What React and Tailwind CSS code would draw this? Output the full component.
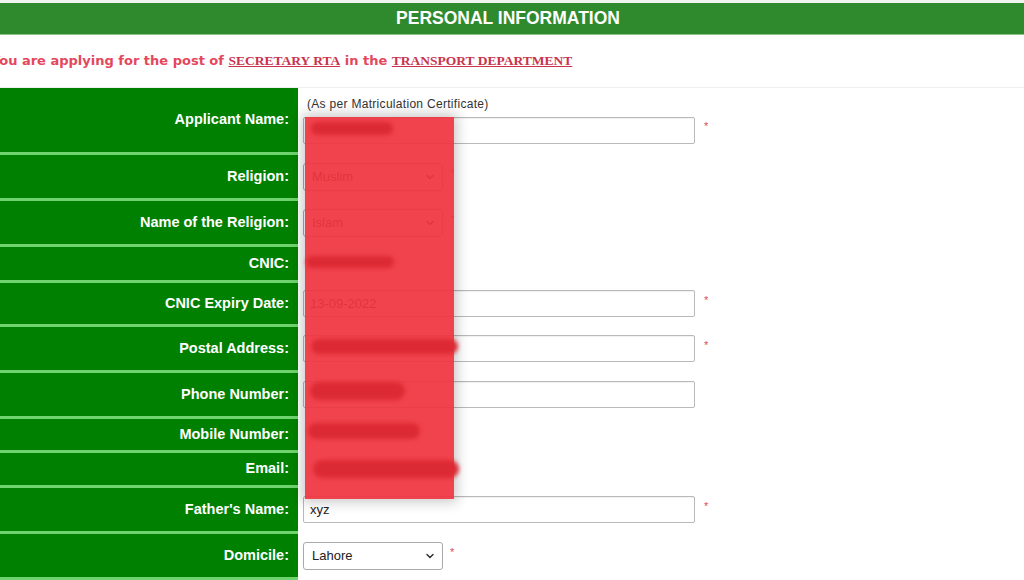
import React from "react";
import { ChevronDown } from "lucide-react";

const font = { fontFamily: '"Liberation Sans", Arial, sans-serif' };
const serif = { fontFamily: '"Liberation Serif", "Times New Roman", serif' };
const verdana = { fontFamily: '"DejaVu Sans", Verdana, sans-serif' };

function Star({ className = "" }) {
  return <span className={"text-[#e04a5a] text-[11px] leading-none -mt-[6px] " + className}>*</span>;
}

function TextInput({ value = "" }) {
  return (
    <div className="flex items-center">
      <div className="w-[392px] h-[27px] border border-[#b9b9b9] rounded-[2px] bg-white flex items-center px-[6px] text-[13px] text-[#222] shadow-[inset_0_1px_1px_rgba(0,0,0,0.06)]">
        {value}
      </div>
    </div>
  );
}

function Select({ value }) {
  return (
    <div className="w-[140px] h-[28px] border border-[#a9a9a9] rounded-[3px] bg-white flex items-center justify-between pl-[8px] pr-[6px] text-[13px] text-[#222]">
      <span>{value}</span>
      <ChevronDown size={12} strokeWidth={3} className="text-[#333]" />
    </div>
  );
}

const rows = [
  {
    label: "Applicant Name:",
    h: "h-[67px]",
    content: (
      <div className="flex flex-col pt-[10px]">
        <span className="text-[12px] tracking-[0.3px] text-[#333] pl-[4px] leading-[13px]">(As per Matriculation Certificate)</span>
        <div className="flex items-start mt-[6px] gap-[9px]">
          <TextInput />
          <Star className="mt-[4px]" />
        </div>
      </div>
    ),
    top: true,
  },
  {
    label: "Religion:",
    h: "h-[46px]",
    content: (
      <div className="flex items-center gap-[7px]">
        <Select value="Muslim" />
        <Star />
      </div>
    ),
  },
  {
    label: "Name of the Religion:",
    h: "h-[46px]",
    content: (
      <div className="flex items-center gap-[7px]">
        <Select value="Islam" />
        <Star />
      </div>
    ),
  },
  { label: "CNIC:", h: "h-[36px]", content: null },
  {
    label: "CNIC Expiry Date:",
    h: "h-[44px]",
    content: (
      <div className="flex items-center gap-[9px]">
        <TextInput value="13-09-2022" />
        <Star />
      </div>
    ),
  },
  {
    label: "Postal Address:",
    h: "h-[46px]",
    content: (
      <div className="flex items-center gap-[9px]">
        <TextInput />
        <Star />
      </div>
    ),
  },
  {
    label: "Phone Number:",
    h: "h-[46px]",
    content: (
      <div className="flex items-center gap-[9px]">
        <TextInput />
      </div>
    ),
  },
  { label: "Mobile Number:", h: "h-[34px]", content: null },
  { label: "Email:", h: "h-[35px]", content: null },
  {
    label: "Father's Name:",
    h: "h-[46px]",
    content: (
      <div className="flex items-center gap-[9px]">
        <TextInput value="xyz" />
        <Star />
      </div>
    ),
  },
  {
    label: "Domicile:",
    h: "h-[46px]",
    content: (
      <div className="flex items-center gap-[7px]">
        <Select value="Lahore" />
        <Star />
      </div>
    ),
  },
];

export default function App() {
  return (
    <div className="relative w-[1024px] h-[580px] overflow-hidden bg-white" style={font}>
      <div className="h-[3px] bg-[#eef5ec]" />
      <div className="h-[32px] bg-[#2f8a2d] border-b border-[#8fc08a] flex items-center justify-center">
        <span className="text-white font-bold text-[17.5px] -ml-[8px]">PERSONAL INFORMATION</span>
      </div>
      <div className="h-[52px] flex items-center overflow-hidden">
        <p className="-ml-[9px] whitespace-nowrap text-[13px] font-bold text-[#e4485c]" style={verdana}>
          You are applying for the post of{" "}
          <span className="underline text-[#c9344c] text-[13.5px]" style={serif}>
            SECRETARY RTA
          </span>{" "}
          in the{" "}
          <span className="underline text-[#c9344c] text-[13.5px]" style={serif}>
            TRANSPORT DEPARTMENT
          </span>
        </p>
      </div>

      <div className="grid grid-cols-[298px_1fr] border-t border-[#f0f0f0]">
        {rows.map((r, i) => (
          <React.Fragment key={i}>
            <div
              className={
                r.h +
                " bg-[#008000] border-b-[3px] border-[#6fd36f] flex items-center justify-end pr-[9px] text-white font-bold text-[14.5px]"
              }
            >
              {r.label}
            </div>
            <div className={r.h + " pb-[3px] pl-[5px] flex " + (r.top ? "items-start" : "items-center")}>
              {r.content}
            </div>
          </React.Fragment>
        ))}
      </div>

      {/* redaction overlay */}
      <div className="absolute left-[305px] top-[117px] w-[149px] h-[382px] bg-[#f0353f]/[0.93] shadow-[0_0_12px_3px_rgba(0,0,0,0.22)]" />
      {/* redaction blobs */}
      <div className="absolute left-[311px] top-[122px] w-[82px] h-[13px] rounded-full bg-[#dc2a34] blur-[2px]" />
      <div className="absolute left-[306px] top-[256px] w-[88px] h-[12px] rounded-full bg-[#dc2a34] blur-[2px]" />
      <div className="absolute left-[311px] top-[339px] w-[147px] h-[15px] rounded-full bg-[#dc2a34] blur-[2px]" />
      <div className="absolute left-[310px] top-[382px] w-[95px] h-[18px] rounded-full bg-[#dc2a34] blur-[2px]" />
      <div className="absolute left-[308px] top-[423px] w-[112px] h-[16px] rounded-full bg-[#dc2a34] blur-[2px]" />
      <div className="absolute left-[313px] top-[460px] w-[146px] h-[18px] rounded-full bg-[#dc2a34] blur-[2px]" />
    </div>
  );
}
